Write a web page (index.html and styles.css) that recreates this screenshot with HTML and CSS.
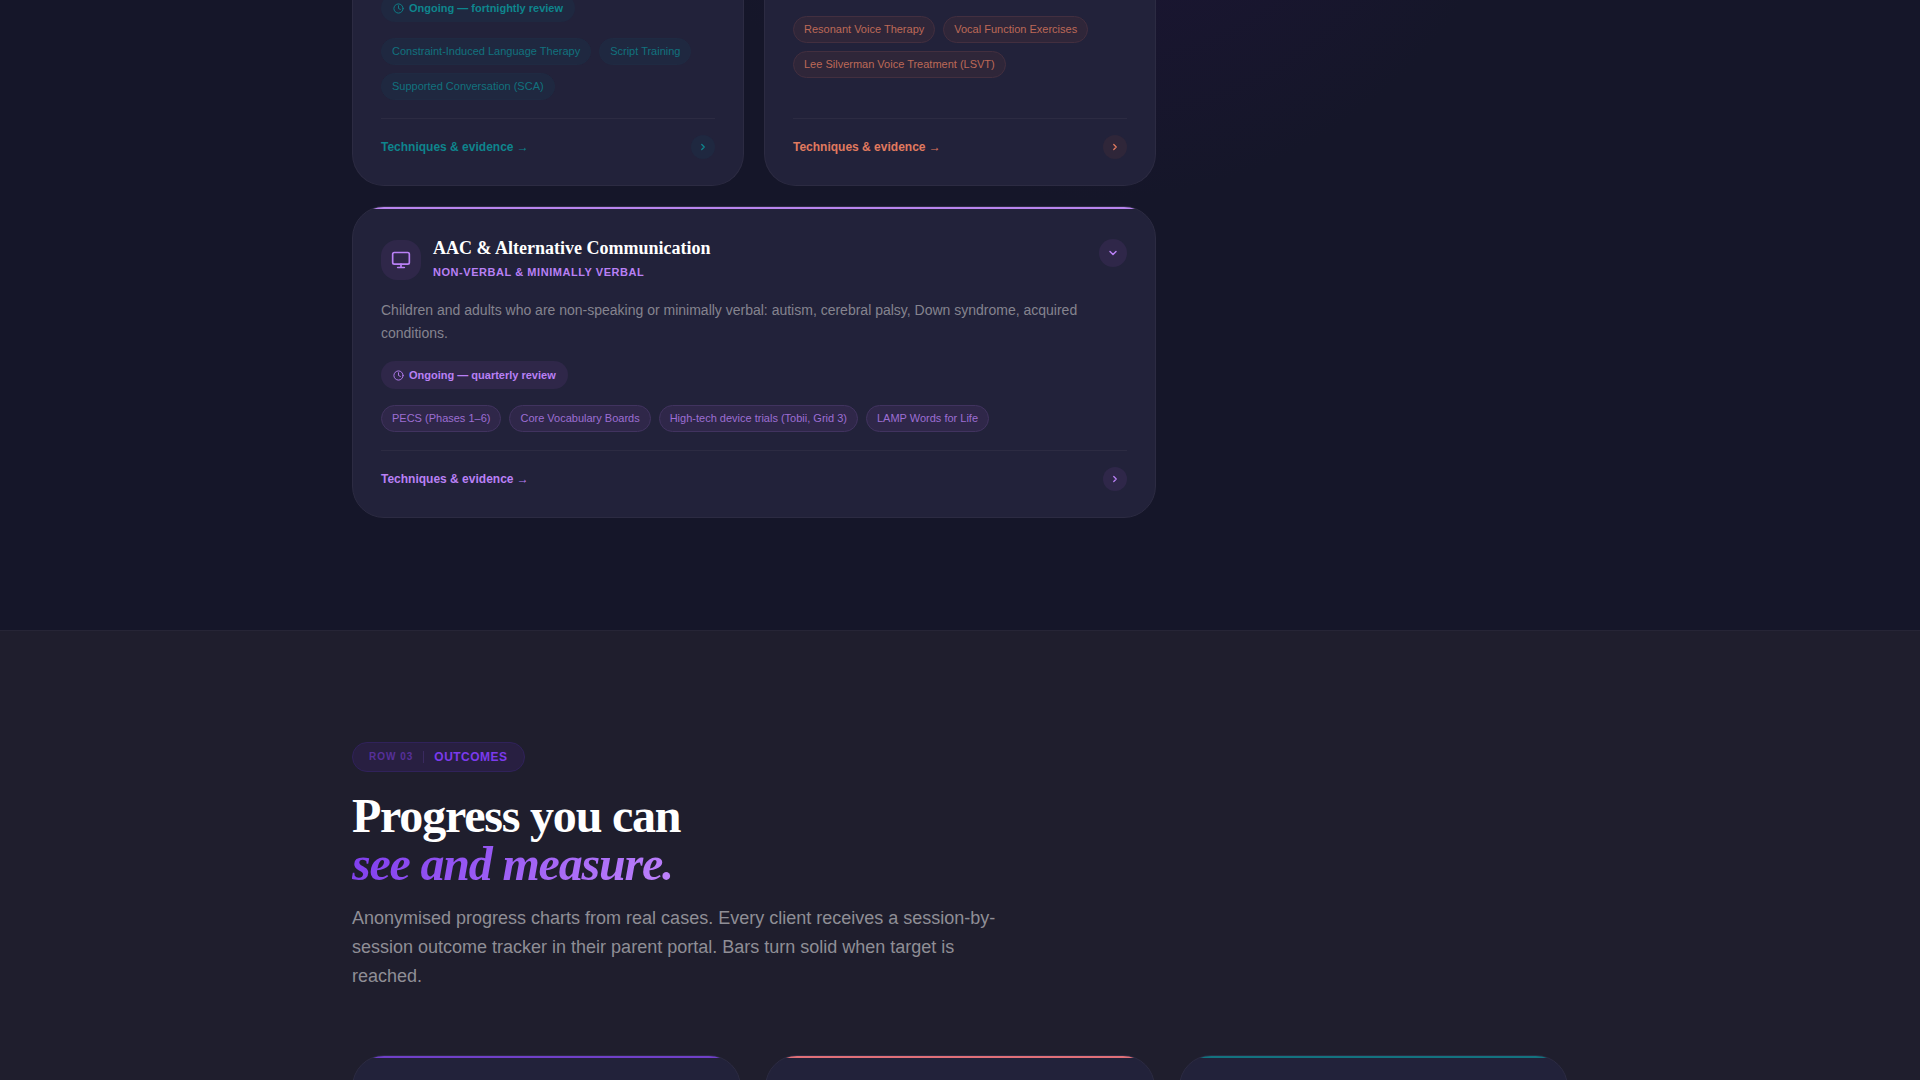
FILE: index.html
```
<!DOCTYPE html>
<html lang="en">
<head>
<meta charset="utf-8">
<meta name="viewport" content="width=device-width, initial-scale=1">
<title>Therapy programmes and outcomes</title>
<link rel="stylesheet" href="styles.css">
</head>
<body>
<svg class="sprite" aria-hidden="true">
  <symbol id="clock" viewBox="0 0 24 24"><circle cx="12" cy="12" r="10"/><path d="M12 6v6l4 2"/></symbol>
  <symbol id="right" viewBox="0 0 24 24"><path d="M9 18l6-6-6-6"/></symbol>
  <symbol id="down" viewBox="0 0 24 24"><path d="M6 9l6 6 6-6"/></symbol>
  <symbol id="monitor" viewBox="0 0 24 24"><rect x="2" y="3" width="20" height="14" rx="2"/><path d="M8 21h8M12 17v4"/></symbol>
</svg>
<main>
  <section class="programmes">
    <div class="container">
      <div class="programme-grid">
        <article class="card card-continued teal">
          <p class="pill"><svg class="icon icon-clock"><use href="#clock"/></svg>Ongoing — fortnightly review</p>
          <ul class="tags">
            <li>Constraint-Induced Language Therapy</li>
            <li>Script Training</li>
            <li>Supported Conversation (SCA)</li>
          </ul>
          <footer class="card-footer">
            <a href="#evidence-aphasia">Techniques &amp; evidence →</a>
            <button class="round" type="button" aria-label="Open"><svg class="icon icon-small"><use href="#right"/></svg></button>
          </footer>
        </article>
        <article class="card card-continued card-tags-first orange">
          <ul class="tags">
            <li>Resonant Voice Therapy</li>
            <li>Vocal Function Exercises</li>
            <li>Lee Silverman Voice Treatment (LSVT)</li>
          </ul>
          <footer class="card-footer">
            <a href="#evidence-voice">Techniques &amp; evidence →</a>
            <button class="round" type="button" aria-label="Open"><svg class="icon icon-small"><use href="#right"/></svg></button>
          </footer>
        </article>
        <article class="card card-wide lilac">
          <header class="card-header">
            <span class="badge-icon"><svg class="icon icon-large"><use href="#monitor"/></svg></span>
            <div class="card-heading">
              <h3>AAC &amp; Alternative Communication</h3>
              <p class="subtitle">Non-verbal &amp; minimally verbal</p>
            </div>
            <button class="round round-large" type="button" aria-label="Expand"><svg class="icon icon-medium"><use href="#down"/></svg></button>
          </header>
          <p class="description">Children and adults who are non-speaking or minimally verbal: autism, cerebral palsy, Down syndrome, acquired conditions.</p>
          <p class="pill"><svg class="icon icon-clock"><use href="#clock"/></svg>Ongoing — quarterly review</p>
          <ul class="tags">
            <li>PECS (Phases 1–6)</li>
            <li>Core Vocabulary Boards</li>
            <li>High-tech device trials (Tobii, Grid 3)</li>
            <li>LAMP Words for Life</li>
          </ul>
          <footer class="card-footer">
            <a href="#evidence-aac">Techniques &amp; evidence →</a>
            <button class="round" type="button" aria-label="Open"><svg class="icon icon-small"><use href="#right"/></svg></button>
          </footer>
        </article>
      </div>
    </div>
  </section>
  <section class="outcomes">
    <div class="container">
      <p class="eyebrow"><span class="eyebrow-row">Row 03</span><span class="eyebrow-name">Outcomes</span></p>
      <h2>Progress you can<br><em>see and measure.</em></h2>
      <p class="lead">Anonymised progress charts from real cases. Every client receives a session-by-session outcome tracker in their parent portal. Bars turn solid when target is reached.</p>
      <div class="outcome-grid">
        <article class="card outcome violet"></article>
        <article class="card outcome coral"></article>
        <article class="card outcome teal"></article>
      </div>
    </div>
  </section>
</main>
</body>
</html>
```
FILE: styles.css
```
* { box-sizing: border-box; }

html { height: 100%; }

body {
  margin: 0;
  height: 100%;
  overflow: hidden;
  background: #1f1e2d;
  color: #fff;
  font-family: "Liberation Sans", Arial, sans-serif;
}

h2, h3, p, ul { margin: 0; padding: 0; }

.sprite { display: none; }

.icon {
  flex: none;
  fill: none;
  stroke: currentColor;
  stroke-width: 2;
  stroke-linecap: round;
  stroke-linejoin: round;
}
.icon-clock { width: 11px; height: 11px; }
.icon-small { width: 10px; height: 10px; stroke-width: 3; }
.icon-medium { width: 12px; height: 12px; stroke-width: 3; }
.icon-large { width: 20px; height: 20px; }

.container {
  max-width: 1280px;
  margin: 0 auto;
  padding: 0 32px;
}

.teal { --accent: #0e858d; --tint: #1f2840; --line: #1f2a42; }
.orange { --accent: #e07a5f; --tint: #2f2639; --line: #432f3f; }
.lilac { --accent: #b980f5; --tint: #2f2749; --line: #41335f; --bar: #b884ee; }
.violet { --bar: #7040c8; }
.coral { --bar: #e07078; }
.outcome.teal { --bar: #13737f; }

/* Programmes */
.programmes {
  padding-bottom: 112px;
  background: radial-gradient(circle 434px at 1100px -235px, #1e1538, #151629) #151629;
}

.programme-grid {
  display: grid;
  grid-template-columns: 1fr 1fr;
  gap: 20px;
  width: 66%;
  min-width: 804px;
}

.card {
  position: relative;
  display: flex;
  flex-direction: column;
  align-items: flex-start;
  overflow: hidden;
  padding: 32px 28px 26px;
  border: 1px solid #2c2b42;
  border-radius: 32px;
  background: #22223a;
}
.card-continued {
  padding-top: 0;
  border-top: 0;
  border-radius: 0 0 32px 32px;
  margin-top: -6px;
}
.card-tags-first { padding-top: 22px; }
.card-wide { grid-column: 1 / -1; }
.card-wide::before,
.outcome::before {
  content: "";
  position: absolute;
  top: 0;
  left: 0;
  right: 0;
  height: 2px;
  background: var(--bar);
}

.card-header {
  display: flex;
  align-items: flex-start;
  gap: 12px;
  width: 100%;
  min-height: 42px;
  margin-bottom: 18px;
}
.card-heading { flex: 1; }

.badge-icon, .round {
  display: flex;
  flex: none;
  align-items: center;
  justify-content: center;
  background: var(--tint);
  color: var(--accent);
}
.badge-icon {
  align-self: center;
  width: 40px;
  height: 40px;
  border-radius: 16px;
}
.round {
  width: 24px;
  height: 24px;
  padding: 0;
  border: 0;
  border-radius: 50%;
  cursor: pointer;
}
.round-large { width: 28px; height: 28px; }

h3 {
  font: bold 18px/18px "Liberation Serif", "Times New Roman", serif;
}
.subtitle {
  margin-top: 8px;
  color: var(--accent);
  font-size: 11px;
  font-weight: bold;
  line-height: 14px;
  letter-spacing: 0.05em;
  text-transform: uppercase;
}
.description {
  margin-bottom: 16px;
  color: #85848f;
  font-size: 14px;
  line-height: 23px;
}

.pill {
  display: flex;
  align-items: center;
  gap: 5px;
  height: 28px;
  margin-bottom: 16px;
  padding: 0 12px;
  border-radius: 14px;
  background: var(--tint);
  color: var(--accent);
  font-size: 11px;
  font-weight: bold;
}

.tags {
  display: flex;
  flex-wrap: wrap;
  gap: 8px;
  margin-bottom: 18px;
  list-style: none;
}
.tags li {
  padding: 0 10px;
  border: 1px solid var(--line);
  border-radius: 14px;
  background: var(--tint);
  color: color-mix(in srgb, var(--accent) 80%, var(--tint));
  font-size: 11px;
  line-height: 25px;
}

.card-footer {
  display: flex;
  align-items: center;
  justify-content: space-between;
  width: 100%;
  margin-top: auto;
  padding-top: 16px;
  border-top: 1px solid #2c2b42;
}
.card-footer a {
  color: var(--accent);
  font-size: 12px;
  font-weight: bold;
  text-decoration: none;
}

/* Outcomes */
.outcomes {
  padding: 111px 0;
  border-top: 1px solid #262536;
  background: #1f1e2d;
}

.eyebrow {
  display: flex;
  align-items: center;
  width: fit-content;
  height: 30px;
  padding: 0 16px;
  border: 1px solid #30225a;
  border-radius: 15px;
  background: #281f41;
  color: #7c3aed;
  font-weight: bold;
  text-transform: uppercase;
}
.eyebrow-row {
  padding-right: 10px;
  border-right: 1px solid #3a2a60;
  color: #57309a;
  font-size: 10px;
  line-height: 12px;
  letter-spacing: 1px;
}
.eyebrow-name {
  padding-left: 10px;
  font-size: 12px;
  letter-spacing: 0.04em;
}

h2 {
  margin: 20px 0 16px;
  font: bold 48px/48px "Liberation Serif", "Times New Roman", serif;
  letter-spacing: -0.025em;
}
h2 em {
  background: linear-gradient(135deg, #7c3aed, #c084fc);
  background-clip: text;
  -webkit-background-clip: text;
  color: transparent;
}

.lead {
  max-width: 672px;
  color: #8f8e96;
  font-size: 18px;
  line-height: 29px;
}

.outcome-grid {
  display: grid;
  grid-template-columns: repeat(3, 1fr);
  gap: 24px;
  margin-top: 64px;
}
.outcome { min-height: 320px; }
```
